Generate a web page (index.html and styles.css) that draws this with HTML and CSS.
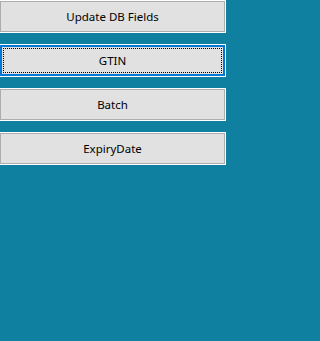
FILE: index.html
```html
<!DOCTYPE html>
<html>
<head>
<meta charset="utf-8">
<link rel="stylesheet" href="styles.css">
</head>
<body>
<div class="panel">
  <button class="btn">Update DB Fields</button>
  <button class="btn btn-focus">GTIN</button>
  <button class="btn">Batch</button>
  <button class="btn">ExpiryDate</button>
</div>
</body>
</html>
```
FILE: styles.css
```css
html, body {
  margin: 0;
  padding: 0;
  background: #0f80a0;
  height: 100%;
  overflow: hidden;
}
.panel {
  display: flex;
  flex-direction: column;
  gap: 11px;
  width: 227px;
  margin-left: -1px;
}
.btn {
  box-sizing: border-box;
  height: 33px;
  width: 100%;
  margin: 0;
  padding: 0;
  border: 1px solid #ffffff;
  box-shadow: inset 0 0 0 1px #adadad;
  background: #e1e1e1;
  color: #000;
  font-family: "Noto Sans", "DejaVu Sans", sans-serif;
  font-size: 11.5px;
  line-height: 16px;
  text-align: center;
  cursor: default;
}
.btn-focus {
  box-shadow: inset 0 0 0 2px #0078d7;
  outline: 1px dotted #000;
  outline-offset: -5px;
}
```
